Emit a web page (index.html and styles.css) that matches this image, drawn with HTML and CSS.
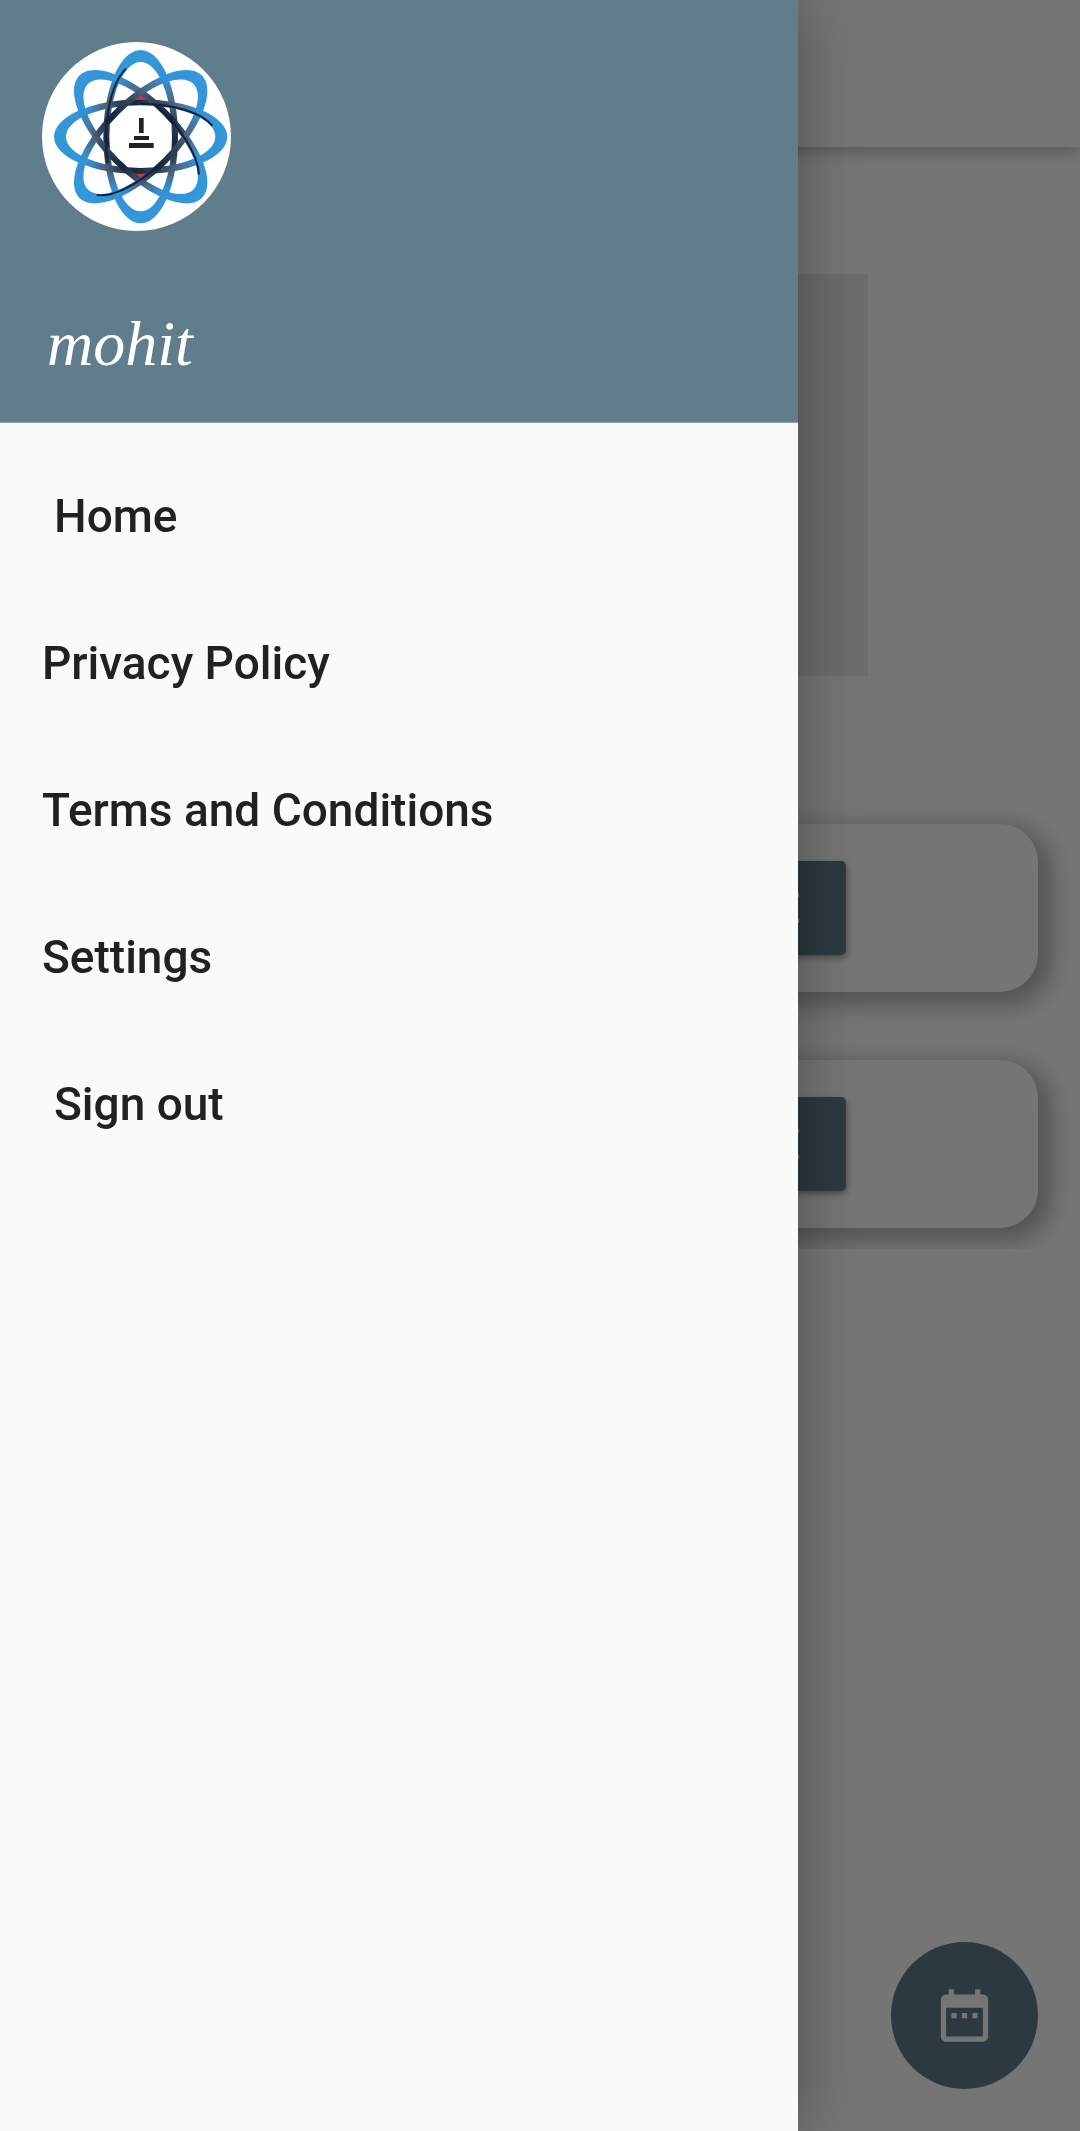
FILE: index.html
```html
<!DOCTYPE html>
<html lang="en">
<head>
<meta charset="utf-8">
<meta name="viewport" content="width=device-width, initial-scale=1">
<title>Home</title>
<link rel="stylesheet" href="styles.css">
</head>
<body>
<div class="page">
  <header class="app-bar"></header>
  <main class="content">
    <div class="banner"></div>
    <div class="cards">
      <section class="card"><button class="card-button" type="button">TAKE ATTENDANCE</button></section>
      <section class="card"><button class="card-button" type="button">VIEW ATTENDANCE</button></section>
    </div>
  </main>
  <button class="fab" type="button" aria-label="Calendar">
    <svg class="fab-icon" viewBox="0 0 24 24" aria-hidden="true"><path d="M9 11H7v2h2v-2zm4 0h-2v2h2v-2zm4 0h-2v2h2v-2zm2-7h-1V2h-2v2H8V2H6v2H5c-1.110 0-1.990.9-1.990 2L3 20c0 1.100.89 2 2 2h14c1.100 0 2-.9 2-2V6c0-1.100-.9-2-2-2zm0 16H5V9h14v11z"/></svg>
  </button>
</div>
<div class="scrim"></div>
<aside class="drawer">
  <div class="drawer-header">
    <svg class="avatar" viewBox="36 36 567 567" role="img" aria-label="Logo">
      <defs>
        <linearGradient id="ring" gradientUnits="userSpaceOnUse" x1="0" y1="-260" x2="0" y2="260">
          <stop offset="0" stop-color="#3498db"/>
          <stop offset=".17" stop-color="#3292d4"/>
          <stop offset=".29" stop-color="#4a6a88"/>
          <stop offset=".4" stop-color="#35455a"/>
          <stop offset=".55" stop-color="#14243c"/>
          <stop offset=".7" stop-color="#4a6078"/>
          <stop offset=".8" stop-color="#3292d4"/>
          <stop offset="1" stop-color="#3498db"/>
        </linearGradient>
        <path id="loop" fill="url(#ring)" fill-rule="evenodd" d="M-112 0A112 260 0 0 1 112 0A112 260 0 0 1-112 0ZM-94 0A94 224 0 0 0 94 0A94 224 0 0 0-94 0Z"/>
      </defs>
      <circle cx="319.5" cy="319.5" r="283.500" fill="#fff"/>
      <path d="M332 188l24 20h-48zM332 452l24-22h-48z" fill="#d8353f"/>
      <g transform="translate(332 320)">
        <use href="#loop"/>
        <use href="#loop" transform="rotate(90)"/>
        <use href="#loop" transform="rotate(-45)"/>
        <use href="#loop" transform="rotate(45)"/>
        <g fill="none" stroke="#10233b" stroke-width="6">
          <path d="M-99 80A99 228 0 0 1-44-204"/>
          <path d="M0-99A228 99 0 0 1 215-33"/>
          <path d="M99-40A99 228 0 0 1 43 204" transform="rotate(-45)"/>
          <path d="M99 20A99 228 0 0 1 30 217" transform="rotate(45)"/>
        </g>
      </g>
      <path fill="#222" d="M327 264h14v45h-14zM312 318h45v12h-45zM297 339h74v15h-74z"/>
    </svg>
    <h1 class="user-name">mohit</h1>
  </div>
  <nav class="menu">
    <a class="menu-item inset" href="#home">Home</a>
    <a class="menu-item" href="#privacy">Privacy Policy</a>
    <a class="menu-item" href="#terms">Terms and Conditions</a>
    <a class="menu-item" href="#settings">Settings</a>
    <a class="menu-item inset" href="#signout">Sign out</a>
  </nav>
</aside>
</body>
</html>
```
FILE: styles.css
```css
* {
  box-sizing: border-box;
}

body {
  margin: 0;
  background: #fff;
  font-family: Roboto, "Liberation Sans", sans-serif;
}

.page {
  min-height: 100vh;
}

.app-bar {
  height: 147px;
  background: #fff;
  box-shadow: 0 4px 16px rgba(0, 0, 0, 0.28);
}

.content {
  padding-top: 127px;
}

.banner {
  width: 656px;
  max-width: 100%;
  height: 402px;
  margin: 0 auto;
  background: #ebebeb;
}

.cards {
  display: flex;
  flex-direction: column;
  gap: 68px;
  margin-top: 127px;
  padding: 21px 42px;
  overflow: hidden;
}

.card {
  display: flex;
  justify-content: center;
  padding: 37px;
  border-radius: 38px;
  background: #fff;
  box-shadow: 8px 8px 22px 6px rgba(0, 0, 0, 0.28);
}

.card-button {
  width: 612px;
  height: 94px;
  padding: 0 46px;
  border: 0;
  border-radius: 5px;
  background: #607d8b;
  box-shadow: 1px 3px 6px rgba(0, 0, 0, 0.35);
  color: #fff;
  font: 500 42px Roboto, "Liberation Sans", sans-serif;
  text-align: right;
}

.fab {
  position: fixed;
  right: 42px;
  bottom: 42px;
  display: grid;
  place-items: center;
  width: 147px;
  height: 147px;
  padding: 0;
  border: 0;
  border-radius: 50%;
  background: #607d8b;
}

.fab-icon {
  width: 63px;
  height: 63px;
  fill: #fff;
}

.scrim {
  position: fixed;
  inset: 0;
  background: rgba(0, 0, 0, 0.54);
}

.drawer {
  position: fixed;
  top: 0;
  bottom: 0;
  left: 0;
  width: 798px;
  max-width: 90%;
  background: #fafafa;
  box-shadow: 0 0 64px rgba(0, 0, 0, 0.35);
}

.drawer-header {
  padding: 42px 42px 38px;
  border-bottom: 1px solid #8fa0aa;
  background: #607d8b;
}

.avatar {
  display: block;
  width: 189px;
  height: 189px;
}

.user-name {
  margin: 73px 0 0;
  padding-left: 5px;
  color: #fff;
  font: italic 400 64px/80px "Liberation Serif", serif;
}

.menu {
  display: flex;
  flex-direction: column;
  padding-top: 20px;
}

.menu-item {
  padding: 0 42px;
  color: #212121;
  font-size: 46px;
  font-weight: 500;
  line-height: 147px;
  text-decoration: none;
}

.inset {
  padding-left: 54px;
}
```
